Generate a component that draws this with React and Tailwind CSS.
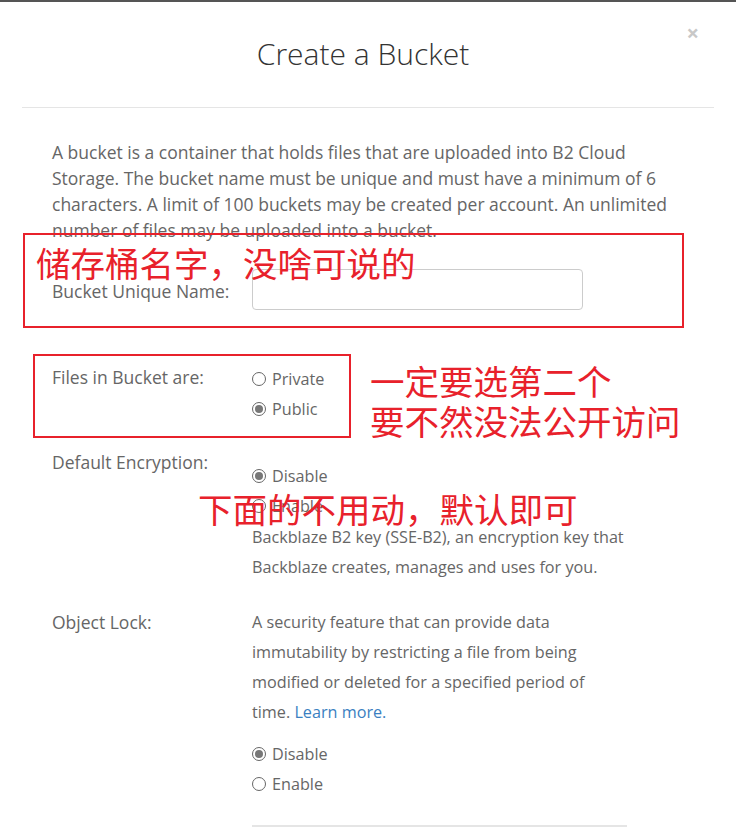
import React from "react";

const Radio = ({ checked, label }) => (
  <div className="flex items-center h-[30px]">
    <span className="w-[14px] h-[14px] rounded-full border border-[#666] flex items-center justify-center bg-white mr-[6px]">
      {checked && <span className="w-[8px] h-[8px] rounded-full bg-[#777]" />}
    </span>
    <span>{label}</span>
  </div>
);

const cjk = { fontFamily: '"Noto Sans CJK SC", sans-serif' };

export default function App() {
  return (
    <div className="relative w-[736px] h-[832px] bg-white border-t-2 border-[#555] overflow-hidden text-[16.2px] text-[#666]" style={{ fontFamily: '"Open Sans", "Liberation Sans", sans-serif' }}>
      <div className="mx-[22px] border-b border-[#e5e5e5] h-[106px] flex items-center justify-center relative">
        <h1 className="text-[30px] font-light text-[#333] pr-[10px] -mt-[2px]">Create a Bucket</h1>
        <span className="absolute right-[15px] top-[19px] text-[22px] font-bold text-[#c8c8c8] leading-none">×</span>
      </div>
      <div className="px-[52px]">
        <p className="mt-[31px] leading-[26px] w-[630px] text-[17.5px]">
          A bucket is a container that holds files that are uploaded into B2 Cloud Storage. The bucket name must be unique and must have a minimum of 6 characters. A limit of 100 buckets may be created per account. An unlimited number of files may be uploaded into a bucket.
        </p>
        <div className="flex items-center mt-[26px] h-[41px]">
          <div className="w-[200px] pt-[3px] text-[17.5px]">Bucket Unique Name:</div>
          <input className="w-[331px] h-[41px] border border-[#ccc] rounded-[4px] outline-none" />
        </div>
        <div className="flex mt-[54px]">
          <div className="w-[200px] leading-[26px] text-[17.5px]">Files in Bucket are:</div>
          <div>
            <Radio label="Private" />
            <Radio checked label="Public" />
          </div>
        </div>
        <div className="flex mt-[25px]">
          <div className="w-[200px] leading-[26px] text-[17.5px]">Default Encryption:</div>
          <div className="pt-[12px]">
            <Radio checked label="Disable" />
            <Radio label="Enable" />
            <p className="leading-[30px] mt-[1px]">
              Backblaze B2 key (SSE-B2), an encryption key that<br />Backblaze creates, manages and uses for you.
            </p>
          </div>
        </div>
        <div className="flex mt-[25px]">
          <div className="w-[200px] leading-[30px] text-[17.5px]">Object Lock:</div>
          <div className="w-[355px]">
            <p className="leading-[30px]">
              A security feature that can provide data immutability by restricting a file from being modified or deleted for a specified period of time. <span className="text-[#3a7fc1]">Learn more.</span>
            </p>
            <div className="mt-[12px]">
              <Radio checked label="Disable" />
              <Radio label="Enable" />
            </div>
          </div>
        </div>
        <div className="ml-[200px] w-[375px] mt-[26px] border-t-2 border-[#e5e5e5]" />
      </div>

      <div className="absolute left-[23px] top-[231px] w-[661px] h-[95px] border-2 border-[#e8212b]" />
      <div className="absolute left-[33px] top-[352px] w-[318px] h-[84px] border-2 border-[#e8212b]" />
      <div className="absolute left-[36px] top-[240px] text-[#e8212b] text-[34.5px] leading-[40px] whitespace-nowrap" style={cjk}>储存桶名字，没啥可说的</div>
      <div className="absolute left-[370px] top-[358px] text-[#e8212b] text-[34.5px] leading-[40px] whitespace-nowrap" style={cjk}>一定要选第二个<br />要不然没法公开访问</div>
      <div className="absolute left-[198px] top-[486px] text-[#e8212b] text-[34.5px] leading-[40px] whitespace-nowrap" style={cjk}>下面的不用动，默认即可</div>
    </div>
  );
}
